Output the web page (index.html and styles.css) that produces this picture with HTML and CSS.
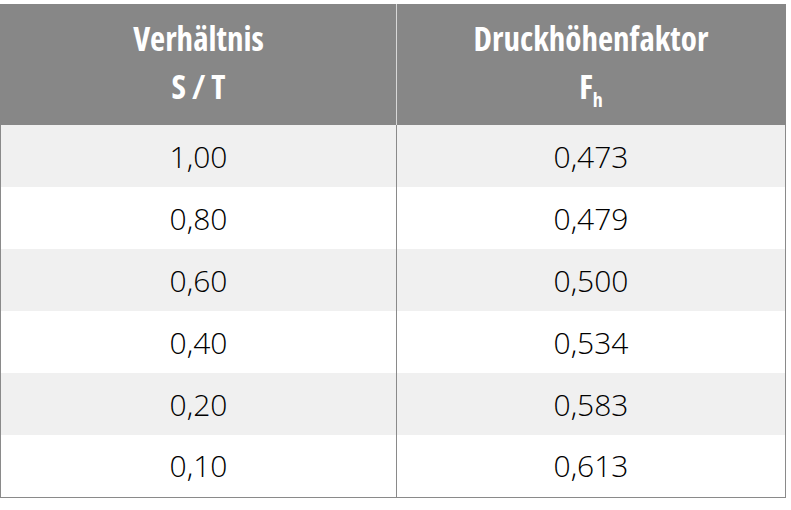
FILE: index.html
```html
<!DOCTYPE html>
<html lang="de">
<head>
<meta charset="utf-8">
<title>Druckhöhenfaktor</title>
<link rel="stylesheet" href="styles.css">
</head>
<body>
<div class="wrap">
<table class="factors">
  <thead>
    <tr>
      <th>Verhältnis<br>S / T</th>
      <th>Druckhöhenfaktor<br>F<sub>h</sub></th>
    </tr>
  </thead>
  <tbody>
    <tr><td>1,00</td><td>0,473</td></tr>
    <tr><td>0,80</td><td>0,479</td></tr>
    <tr><td>0,60</td><td>0,500</td></tr>
    <tr><td>0,40</td><td>0,534</td></tr>
    <tr><td>0,20</td><td>0,583</td></tr>
    <tr><td>0,10</td><td>0,613</td></tr>
  </tbody>
</table>
</div>
</body>
</html>
```

FILE: styles.css
```css
html, body {
  margin: 0;
  padding: 0;
  background: #ffffff;
}
.wrap {
  padding: 4px 0 0 0;
  width: 786px;
}
.factors {
  width: 786px;
  border-collapse: collapse;
  table-layout: fixed;
  font-family: "Open Sans", "Lato", sans-serif;
  color: #000000;
}
.factors th {
  background: #878787;
  color: #ffffff;
  font-weight: 700;
  font-stretch: 75%;
  font-size: 33px;
  line-height: 48px;
  height: 121px;
  padding: 0 0 4px 0;
  box-sizing: border-box;
  text-align: center;
  vertical-align: middle;
  border-left: 1px solid #d8d8d8;
}
.factors th:first-child {
  border-left: 1px solid #878787;
  width: 396px;
}
.factors th:last-child {
  border-right: 1px solid #878787;
}
.factors sub {
  font-size: 20px;
  line-height: 0;
  vertical-align: -8px;
}
.factors td {
  height: 62px;
  padding: 0;
  box-sizing: border-box;
  text-align: center;
  vertical-align: middle;
  font-size: 30px;
  font-weight: 300;
  border-left: 1px solid #8a8a8a;
  border-right: 1px solid #8a8a8a;
}
.factors tbody tr:nth-child(odd) td {
  background: #f0f0f0;
}
.factors tbody tr:last-child td {
  border-bottom: 1px solid #8a8a8a;
}
```
